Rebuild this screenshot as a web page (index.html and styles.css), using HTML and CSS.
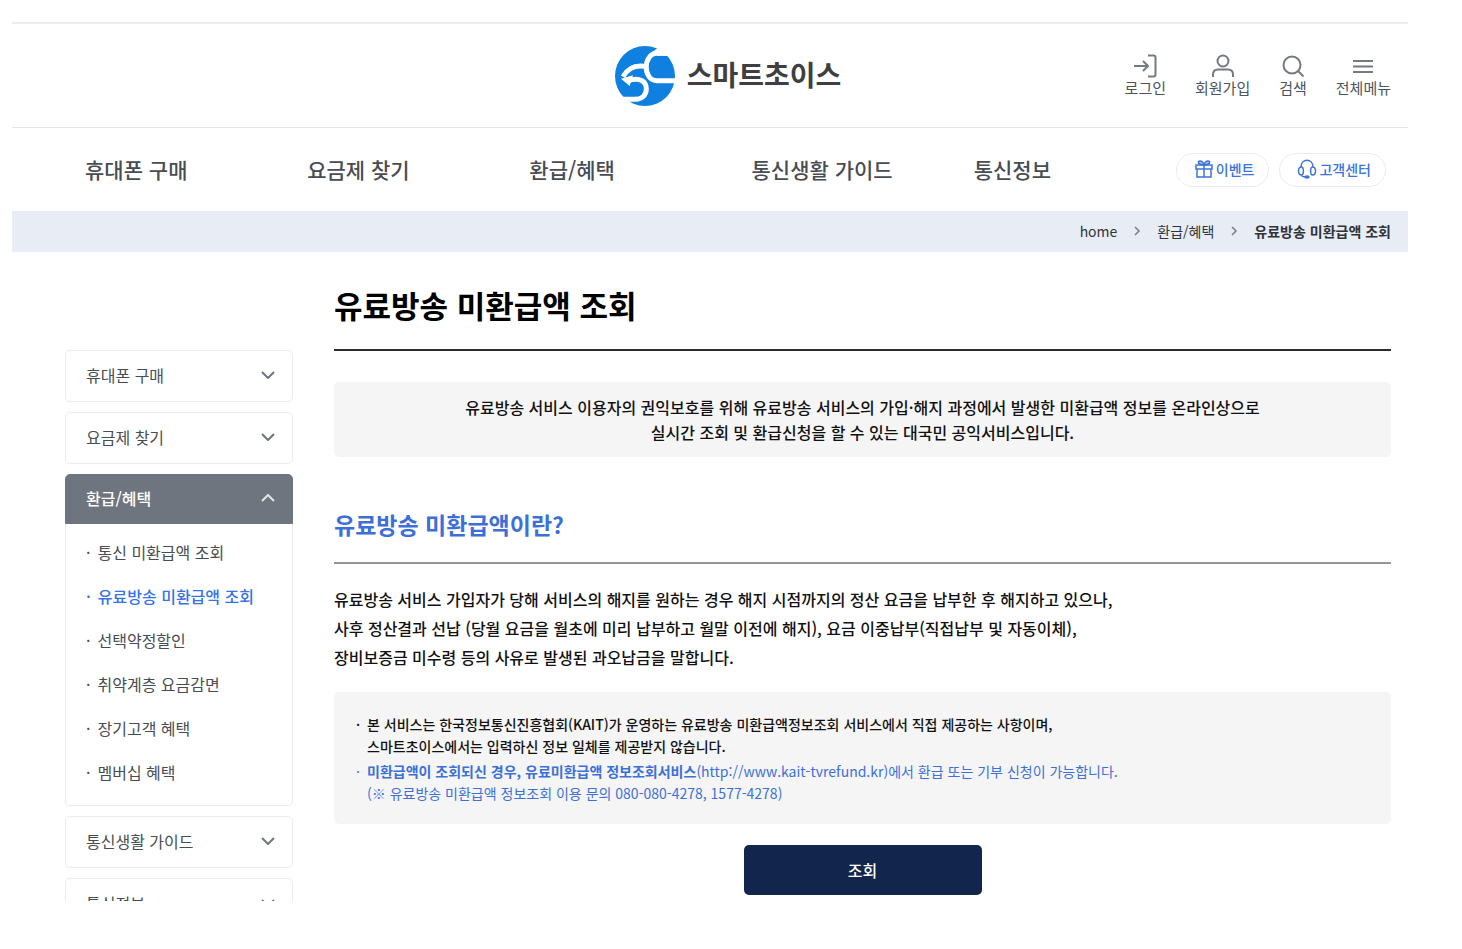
FILE: index.html
```html
<!DOCTYPE html>
<html lang="ko">
<head>
<meta charset="utf-8">
<meta name="viewport" content="width=device-width, initial-scale=1">
<title>유료방송 미환급액 조회 - 스마트초이스</title>
<link rel="stylesheet" href="styles.css">
</head>
<body>
<div class="frame">
  <header class="header">
    <a class="logo" href="#">
      <svg class="logo-mark" viewBox="0 0 180 180" aria-hidden="true">
        <circle cx="90" cy="90" r="90" fill="#0f7fe0"/>
        <path d="M136 0L112 18L128 29H160L182 60V0Z" fill="#fff"/>
        <g fill="none" stroke="#fff" stroke-width="15">
          <path d="M160 22H126C84 22 82 104 126 104H184"/>
          <path d="M94 62C64 56 40 64 24 92"/>
          <path d="M40 104C74 92 94 106 94 128C94 150 78 160 58 160H10"/>
        </g>
        <path d="M18 98L54 88L44 120Z" fill="#fff"/>
      </svg>
      <span>스마트초이스</span>
    </a>
    <ul class="utils">
      <li><a href="#"><svg class="util-icon" viewBox="0 0 24 24" aria-hidden="true"><path d="M1 12h14M10 7l5 5-5 5M15 1.500h5.500q2 0 2 2v17q0 2-2 2H15"/></svg><span>로그인</span></a></li>
      <li><a href="#"><svg class="util-icon" viewBox="0 0 24 24" aria-hidden="true"><circle cx="12" cy="7" r="5.500"/><path d="M2 23v-2.500q0-5 5-5h10q5 0 5 5V23"/></svg><span>회원가입</span></a></li>
      <li><a href="#"><svg class="util-icon" viewBox="0 0 24 24" aria-hidden="true"><circle cx="11" cy="11" r="8.500"/><path d="M17 17L22.500 22.500"/></svg><span>검색</span></a></li>
      <li><a href="#"><svg class="util-icon" viewBox="0 0 24 24" aria-hidden="true"><path d="M2 7h20M2 12.500h20M2 18h20"/></svg><span>전체메뉴</span></a></li>
    </ul>
  </header>

  <div class="gnb">
    <nav class="gnb-menu" aria-label="주 메뉴">
      <a href="#">휴대폰 구매</a>
      <a href="#">요금제 찾기</a>
      <a href="#">환급/혜택</a>
      <a href="#">통신생활 가이드</a>
      <a href="#">통신정보</a>
    </nav>
    <div class="quick">
      <a href="#"><svg class="gift" viewBox="0 0 18 18" aria-hidden="true"><path d="M1 5h16v4H1zM2 9h14v8H2zM9 5v12"/><path d="M9 5C3 5 2 1 5 1S9 5 9 5S10 1 13 1S15 5 9 5" fill="#a9c2f3"/></svg>이벤트</a>
      <a href="#"><svg class="headset" viewBox="0 0 20 20" aria-hidden="true"><path d="M4 8C4-1 16-1 16 8M4.500 8C.5 8 .5 16 4.500 16C7 16 7 8 4.500 8M15.500 8C19.500 8 19.500 16 15.500 16C13 16 13 8 15.500 8M4 16Q5 18 9 18"/><ellipse cx="10" cy="18" rx="2" ry="1" fill="currentColor"/></svg>고객센터</a>
    </div>
  </div>

  <nav class="crumbs" aria-label="현재 위치">
    <a href="#">home</a>
    <svg class="crumb-arrow" viewBox="0 0 8 10" aria-hidden="true"><path d="M2 1l4 4-4 4"/></svg>
    <a href="#">환급/혜택</a>
    <svg class="crumb-arrow" viewBox="0 0 8 10" aria-hidden="true"><path d="M2 1l4 4-4 4"/></svg>
    <strong>유료방송 미환급액 조회</strong>
  </nav>

  <div class="layout">
    <aside class="side">
      <button class="side-item" type="button">휴대폰 구매<svg class="chev" viewBox="0 0 14 8" aria-hidden="true"><path d="M1 1l6 6 6-6"/></svg></button>
      <button class="side-item" type="button">요금제 찾기<svg class="chev" viewBox="0 0 14 8" aria-hidden="true"><path d="M1 1l6 6 6-6"/></svg></button>
      <div class="side-group">
        <button class="side-head" type="button" aria-expanded="true">환급/혜택<svg class="chev" viewBox="0 0 14 8" aria-hidden="true"><path d="M1 7l6-6 6 6"/></svg></button>
        <ul class="side-list">
          <li><a href="#">통신 미환급액 조회</a></li>
          <li><a class="current" href="#" aria-current="page">유료방송 미환급액 조회</a></li>
          <li><a href="#">선택약정할인</a></li>
          <li><a href="#">취약계층 요금감면</a></li>
          <li><a href="#">장기고객 혜택</a></li>
          <li><a href="#">멤버십 혜택</a></li>
        </ul>
      </div>
      <button class="side-item" type="button">통신생활 가이드<svg class="chev" viewBox="0 0 14 8" aria-hidden="true"><path d="M1 1l6 6 6-6"/></svg></button>
      <button class="side-item" type="button">통신정보<svg class="chev" viewBox="0 0 14 8" aria-hidden="true"><path d="M1 1l6 6 6-6"/></svg></button>
    </aside>

    <main class="content">
      <h1>유료방송 미환급액 조회</h1>
      <p class="intro">유료방송 서비스 이용자의 권익보호를 위해 유료방송 서비스의 가입·해지 과정에서 발생한 미환급액 정보를 온라인상으로<br>실시간 조회 및 환급신청을 할 수 있는 대국민 공익서비스입니다.</p>
      <h2>유료방송 미환급액이란?</h2>
      <p class="desc">유료방송 서비스 가입자가 당해 서비스의 해지를 원하는 경우 해지 시점까지의 정산 요금을 납부한 후 해지하고 있으나,<br>사후 정산결과 선납 (당월 요금을 월초에 미리 납부하고 월말 이전에 해지), 요금 이중납부(직접납부 및 자동이체),<br>장비보증금 미수령 등의 사유로 발생된 과오납금을 말합니다.</p>
      <ul class="notes">
        <li>본 서비스는 한국정보통신진흥협회(KAIT)가 운영하는 유료방송 미환급액정보조회 서비스에서 직접 제공하는 사항이며,<br>스마트초이스에서는 입력하신 정보 일체를 제공받지 않습니다.</li>
        <li class="blue"><strong>미환급액이 조회되신 경우, 유료미환급액 정보조회서비스</strong>(http://www.kait-tvrefund.kr)에서 환급 또는 기부 신청이 가능합니다.<br>(※ 유료방송 미환급액 정보조회 이용 문의 080-080-4278, 1577-4278)</li>
      </ul>
      <button class="submit" type="button">조회</button>
    </main>
  </div>
</div>
</body>
</html>
```
FILE: styles.css
```css
* { box-sizing: border-box; }
body {
  margin: 0;
  background: #fff;
  color: #111;
  font-family: "Noto Sans CJK KR", sans-serif;
  font-size: 16px;
}
a { color: inherit; text-decoration: none; }
ul { margin: 0; padding: 0; list-style: none; }
h1, h2, p { margin: 0; }
button { font: inherit; cursor: pointer; }
svg { flex: none; fill: none; stroke: currentColor; }

.frame {
  height: calc(100vh - 70px);
  margin: 22px 54px 48px 12px;
  border-top: 2px solid #ececec;
  overflow: hidden;
}

.header {
  display: grid;
  grid-template-columns: 1fr auto 1fr;
  align-items: center;
  height: 104px;
  padding: 0 17px 0 53px;
  border-bottom: 1px solid #e0e5ee;
}
.logo {
  grid-column: 2;
  display: flex;
  align-items: center;
  gap: 12px;
  color: #3f3f42;
  font-size: 28px;
  font-weight: 700;
  line-height: 60px;
}
.logo span { padding-bottom: 3px; line-height: 57px; }
.logo-mark { width: 60px; height: 60px; stroke: none; }
.utils {
  display: flex;
  justify-content: flex-end;
  gap: 29px;
  color: #4d535a;
  font-size: 15px;
  line-height: 20px;
}
.utils a {
  display: flex;
  flex-direction: column;
  align-items: center;
}
.util-icon { width: 24px; height: 24px; stroke: #747a80; stroke-width: 2; }

.gnb {
  display: flex;
  align-items: center;
  height: 83px;
  padding: 0 22px 0 73px;
}
.gnb-menu {
  flex: 1;
  display: grid;
  grid-template-columns: repeat(4, 222fr) 202fr;
  padding-bottom: 2px;
  color: #484d53;
  font-size: 21px;
  font-weight: 500;
}
.quick { display: flex; gap: 10px; }
.quick a {
  display: flex;
  align-items: center;
  height: 34px;
  padding: 0 14px 2px 17px;
  gap: 2px;
  border: 1px solid #e8ecf2;
  border-radius: 17px;
  color: #3c73dc;
  font-size: 14px;
  font-weight: 500;
}
.gift { width: 20px; height: 18px; stroke-width: 1.5; }
.headset { width: 20px; height: 20px; stroke-width: 1.5; }

.crumbs {
  display: flex;
  align-items: center;
  justify-content: flex-end;
  gap: 16px;
  height: 41px;
  padding: 0 17px 2px;
  background: #e8edf5;
  color: #303338;
  font-size: 14px;
}
.crumb-arrow { width: 8px; height: 10px; stroke: #777d86; stroke-width: 1.5; }

.layout {
  display: grid;
  grid-template-columns: 228px 1fr;
  gap: 41px;
  padding: 0 17px 0 53px;
}
.side {
  display: flex;
  flex-direction: column;
  gap: 10px;
  padding-top: 98px;
  color: #484d53;
}
.side-item, .side-head {
  display: flex;
  align-items: center;
  justify-content: space-between;
  width: 100%;
  padding: 0 17px 2px 20px;
  border: 1px solid #e8ecf0;
  border-radius: 5px;
  background: #fff;
  color: inherit;
  text-align: left;
}
.side-item { height: 52px; }
.side-head {
  height: 50px;
  border-color: #6e757e;
  border-radius: 5px 5px 0 0;
  background: #6e757e;
  color: #fff;
  font-weight: 500;
}
.chev { width: 14px; height: 8px; stroke: #6e757e; stroke-width: 2; }
.side-head .chev { stroke: #e4e6e8; }
.side-list {
  padding: 6px 0 11px 20px;
  border: 1px solid #e8ecf0;
  border-top: 0;
  border-radius: 0 0 5px 5px;
}
.side-list a { display: flex; gap: 7px; line-height: 44px; }
.side-list a::before { content: "·"; }
.side-list .current { color: #3672e8; font-weight: 500; }

.content { display: flex; flex-direction: column; }
h1 {
  padding: 31px 0 22px;
  border-bottom: 2px solid #2b2b2b;
  color: #000;
  font-size: 31px;
  font-weight: 700;
  line-height: 44px;
}
.intro {
  margin-top: 31px;
  padding: 13px 20px 12px;
  border-radius: 5px;
  background: #f5f5f5;
  font-weight: 500;
  line-height: 25px;
  text-align: center;
}
h2 {
  margin-top: 50px;
  padding-bottom: 20px;
  border-bottom: 2px solid #94949f;
  color: #3c70d8;
  font-size: 23px;
  font-weight: 700;
  line-height: 35px;
}
.desc { margin-top: 21px; font-weight: 500; line-height: 29px; }
.notes {
  display: grid;
  gap: 3px;
  margin-top: 20px;
  padding: 21px 24px 20px 33px;
  border-radius: 5px;
  background: #f5f5f5;
  font-size: 14px;
  font-weight: 500;
  line-height: 22px;
}
.notes li { position: relative; }
.notes li::before { content: "·"; position: absolute; left: -11px; }
.notes .blue { color: #3c70d8; font-weight: 400; }
.submit {
  align-self: center;
  width: 238px;
  height: 50px;
  margin-top: 21px;
  border: 0;
  border-radius: 5px;
  background: #12254d;
  color: #fff;
  font-weight: 500;
}
```
